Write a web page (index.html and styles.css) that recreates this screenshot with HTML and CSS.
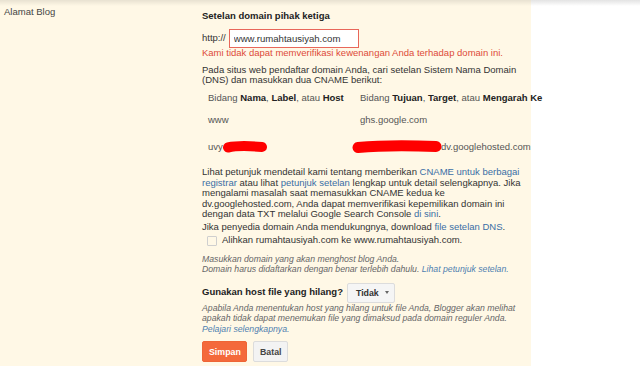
FILE: index.html
```html
<!DOCTYPE html>
<html lang="id">
<head>
  <meta charset="UTF-8"/>
  <title>Setelan - Alamat Blog</title>
  <link rel="stylesheet" href="styles.css">
</head>
<body>
  <div class="panel">
    <div class="label-col">Alamat Blog</div>

    <div class="field-col">
      <div class="section-title">Setelan domain pihak ketiga</div>

      <div class="url-row">
        <span>http://</span>
        <input class="url-input" type="text" value="www.rumahtausiyah.com"/>
      </div>
      <div class="error">Kami tidak dapat memverifikasi kewenangan Anda terhadap domain ini.</div>

      <p class="intro">Pada situs web pendaftar domain Anda, cari setelan Sistem Nama Domain<br>(DNS) dan masukkan dua CNAME berikut:</p>

      <table class="cname">
        <tr>
          <td class="col-name">Bidang <b>Nama</b>, <b>Label</b>, atau <b>Host</b></td>
          <td>Bidang <b>Tujuan</b>, <b>Target</b>, atau <b>Mengarah Ke</b></td>
        </tr>
        <tr>
          <td class="col-name">www</td>
          <td>ghs.google.com</td>
        </tr>
        <tr class="last">
          <td class="col-name">uvy<svg class="blot" width="44" height="12" viewBox="0 0 44 12"><path d="M5 6.5 C14 4.5 28 5 39 6" stroke="#ff0000" stroke-width="10" stroke-linecap="round" fill="none"/></svg></td>
          <td><svg class="blot blot-wide" width="90" height="14" viewBox="0 0 90 14"><path d="M6 7.5 C28 5.5 58 5.5 84 6.5" stroke="#ff0000" stroke-width="11" stroke-linecap="round" fill="none"/></svg>dv.googlehosted.com</td>
        </tr>
      </table>

      <p class="help">Lihat petunjuk mendetail kami tentang memberikan <a href="#">CNAME untuk berbagai<br>registrar</a> atau lihat <a href="#">petunjuk setelan</a> lengkap untuk detail selengkapnya. Jika<br>mengalami masalah saat memasukkan CNAME kedua ke<br>dv.googlehosted.com, Anda dapat memverifikasi kepemilikan domain ini<br>dengan data TXT melalui Google Search Console <a href="#">di sini</a>.</p>
      <p class="help help-dns">Jika penyedia domain Anda mendukungnya, download <a href="#">file setelan DNS</a>.</p>

      <label class="check-row"><span class="box"></span>Alihkan rumahtausiyah.com ke www.rumahtausiyah.com.</label>

      <div class="hint hint-domain">Masukkan domain yang akan menghost blog Anda.<br>Domain harus didaftarkan dengan benar terlebih dahulu. <a href="#">Lihat petunjuk setelan.</a></div>

      <div class="missing-row">
        <span class="missing-label">Gunakan host file yang hilang?</span>
        <button class="select-btn">Tidak <span class="caret"></span></button>
      </div>
      <div class="hint">Apabila Anda menentukan host yang hilang untuk file Anda, Blogger akan melihat<br>apakah tidak dapat menemukan file yang dimaksud pada domain reguler Anda.<br><a href="#">Pelajari selengkapnya.</a></div>

      <div class="actions">
        <button class="save-button">Simpan</button>
        <button class="cancel-button">Batal</button>
      </div>
    </div>
  </div>
</body>
</html>
```

FILE: styles.css
```css
body {
  margin: 0;
  font-family: "Liberation Sans", Arial, sans-serif;
  font-size: 9.5px;
  line-height: 10.5px;
  color: #333;
  background: linear-gradient(#e3e3e3, rgba(255, 255, 255, 0) 6px) no-repeat, #fff;
}

.panel {
  width: 531px;
  min-height: 366px;
  display: flex;
  background: linear-gradient(rgba(0, 0, 0, 0.09), rgba(0, 0, 0, 0) 6px) no-repeat, #fff8e6;
}

.label-col {
  flex: 0 0 202px;
  box-sizing: border-box;
  padding: 7px 0 0 4px;
  color: #444;
}

.field-col {
  flex: 1;
  padding-top: 10.5px;
  white-space: nowrap;
}

.section-title {
  font-weight: bold;
  color: #222;
}

.url-row {
  display: flex;
  align-items: center;
  gap: 3px;
  margin-top: 8px;
}

.url-input {
  width: 130px;
  height: 19px;
  box-sizing: border-box;
  margin: 0;
  padding: 0 4px;
  border: 1px solid #e8675a;
  background: #fff;
  font-family: inherit;
  font-size: 9.6px;
  color: #333;
}

.error {
  color: #dd4b39;
}

p {
  margin: 0;
}

.intro {
  margin-top: 6px;
}

a {
  color: #3a6ea5;
  text-decoration: none;
}

.cname {
  table-layout: fixed;
  width: 323px;
  border-collapse: collapse;
  margin: 2px 0 0 6px;
  color: #555;
}

.cname td {
  height: 22px;
  padding: 0;
  vertical-align: middle;
}

.cname tr.last td {
  height: 30px;
}

.cname b {
  color: #222;
}

.col-name {
  width: 152px;
}

.blot {
  display: inline-block;
  vertical-align: middle;
}

.blot-wide {
  margin: 0 -1px 0 -8px;
}

.help {
  margin-top: 5.5px;
}

.help-dns {
  margin-top: 2px;
}

.check-row {
  display: flex;
  align-items: center;
  gap: 5px;
  margin: 3px 0 0 5px;
}

.box {
  width: 10px;
  height: 10px;
  box-sizing: border-box;
  border: 1px solid #cfcfcf;
  border-radius: 1px;
  margin-top: 1px;
}

.hint {
  font-size: 8.7px;
  font-style: italic;
  color: #666;
}

.hint a {
  color: #4f7fb0;
}

.hint-domain {
  margin-top: 7.5px;
}

.missing-row {
  display: flex;
  align-items: center;
  gap: 4px;
  margin-top: 8px;
}

.missing-label {
  font-weight: bold;
  color: #222;
}

.select-btn {
  width: 48px;
  height: 20px;
  box-sizing: border-box;
  padding: 0 0 0 8px;
  display: flex;
  align-items: center;
  gap: 6px;
  border: 1px solid #dcdcdc;
  border-radius: 2px;
  background: #f5f5f5;
  font-family: inherit;
  font-size: 8.8px;
  font-weight: bold;
  color: #333;
}

.caret {
  width: 0;
  height: 0;
  border-left: 2.5px solid transparent;
  border-right: 2.5px solid transparent;
  border-top: 3px solid #666;
}

.actions {
  display: flex;
  gap: 6px;
  margin-top: 7px;
}

.save-button,
.cancel-button {
  height: 21px;
  box-sizing: border-box;
  border-radius: 2px;
  font-family: inherit;
  font-size: 8.8px;
  font-weight: bold;
}

.save-button {
  width: 45px;
  border: 1px solid #ee6536;
  background-color: #f4693b;
  color: #fff;
}

.cancel-button {
  width: 35px;
  border: 1px solid #dcdcdc;
  background-color: #f3f3f3;
  color: #444;
}
```
